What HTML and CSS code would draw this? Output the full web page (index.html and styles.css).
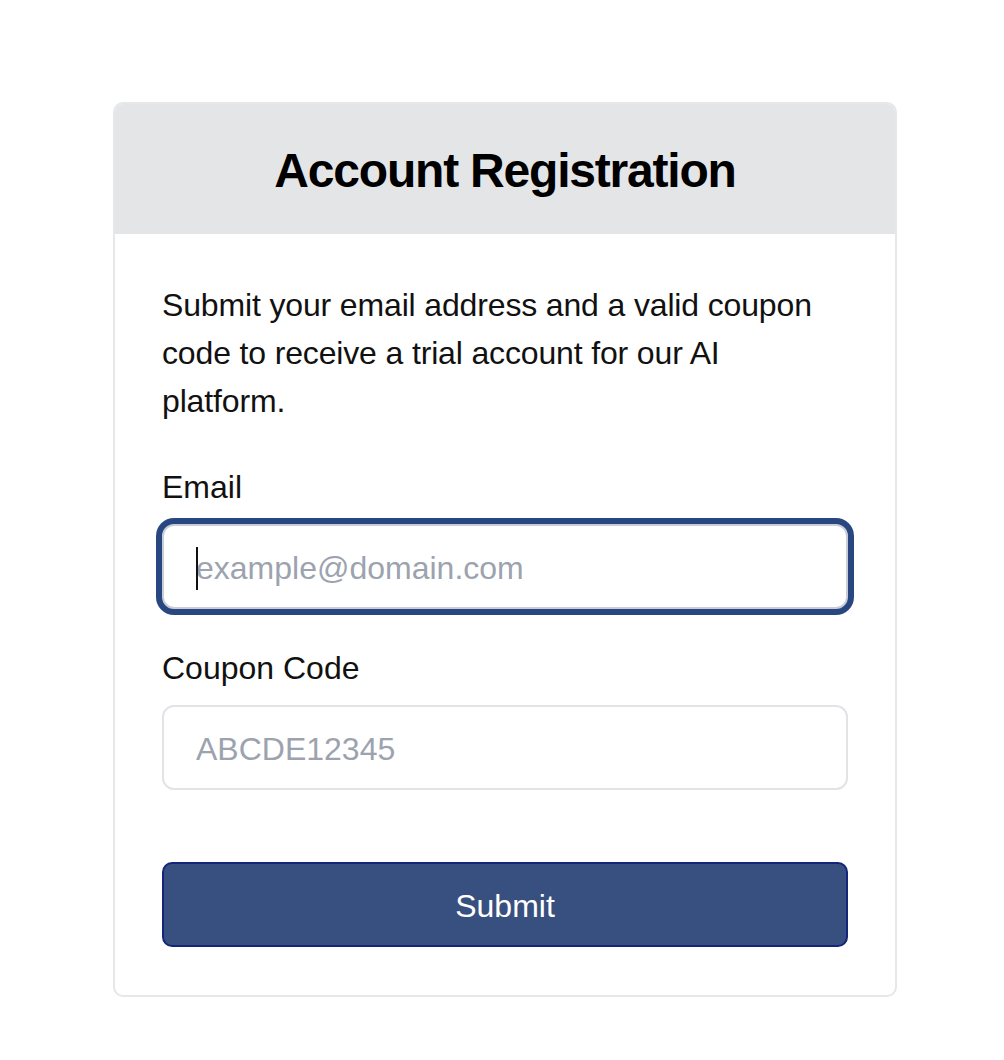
FILE: index.html
```html
<!DOCTYPE html>
<html lang="en">
<head>
<meta charset="utf-8">
<title>Account Registration</title>
<link rel="stylesheet" href="styles.css">
</head>
<body>
<div class="card">
  <div class="card-header">
    <h1 class="title">Account Registration</h1>
  </div>
  <form class="card-body">
    <p class="intro">Submit your email address and a valid coupon code to receive a trial account for our AI platform.</p>
    <label class="label" for="email">Email</label>
    <div class="field field-focused">
      <input class="input input-focused" id="email" type="email" placeholder="example@domain.com">
      <span class="caret"></span>
    </div>
    <label class="label" for="coupon">Coupon Code</label>
    <div class="field">
      <input class="input" id="coupon" type="text" placeholder="ABCDE12345">
    </div>
    <button class="submit" type="button">Submit</button>
  </form>
</div>
</body>
</html>
```

FILE: styles.css
```css
* { box-sizing: border-box; }
html, body { margin: 0; padding: 0; background: #ffffff; }
body {
  font-family: "Liberation Sans", Arial, sans-serif;
  color: #111111;
}
.card {
  width: 784px;
  margin: 102px 0 0 113px;
  border: 2px solid #e6e7e9;
  border-radius: 10px;
  overflow: hidden;
  background: #fff;
}
.card-header {
  background: #e4e5e7;
  padding: 37px 0 31px;
  margin: -2px -2px 0;
}
.title {
  margin: 0;
  text-align: center;
  font-size: 48px;
  line-height: 64px;
  font-weight: 700;
  letter-spacing: -1.2px;
  color: #000;
}
.card-body {
  display: flex;
  flex-direction: column;
  padding: 47px 47px 48px;
}
.intro {
  margin: 0 0 38px;
  font-size: 32px;
  line-height: 48px;
  letter-spacing: -0.15px;
}
.label {
  display: block;
  font-size: 32px;
  line-height: 48px;
  margin-bottom: 13px;
}
.field {
  position: relative;
  margin-bottom: 35px;
}
.input {
  display: block;
  width: 100%;
  height: 85px;
  border: 2px solid #e2e3e6;
  border-radius: 12px;
  padding: 4px 32px 0;
  font-family: "Liberation Sans", Arial, sans-serif;
  font-size: 32px;
  color: #111;
  background: #fff;
  outline: none;
}
.input::placeholder { color: #9ca3af; opacity: 1; }
.input-focused {
  border: 2px solid #c9cdd8;
  box-shadow: 0 0 0 6px #28467f;
}
.caret {
  position: absolute;
  left: 34px;
  top: 23px;
  width: 2px;
  height: 43px;
  background: #111;
}
.submit {
  margin-top: 37px;
  width: 100%;
  height: 85px;
  border: 2px solid #14267a;
  border-radius: 10px;
  padding: 3px 0 0;
  background: #38507f;
  color: #ffffff;
  font-family: "Liberation Sans", Arial, sans-serif;
  font-size: 32px;
  cursor: pointer;
}
```
